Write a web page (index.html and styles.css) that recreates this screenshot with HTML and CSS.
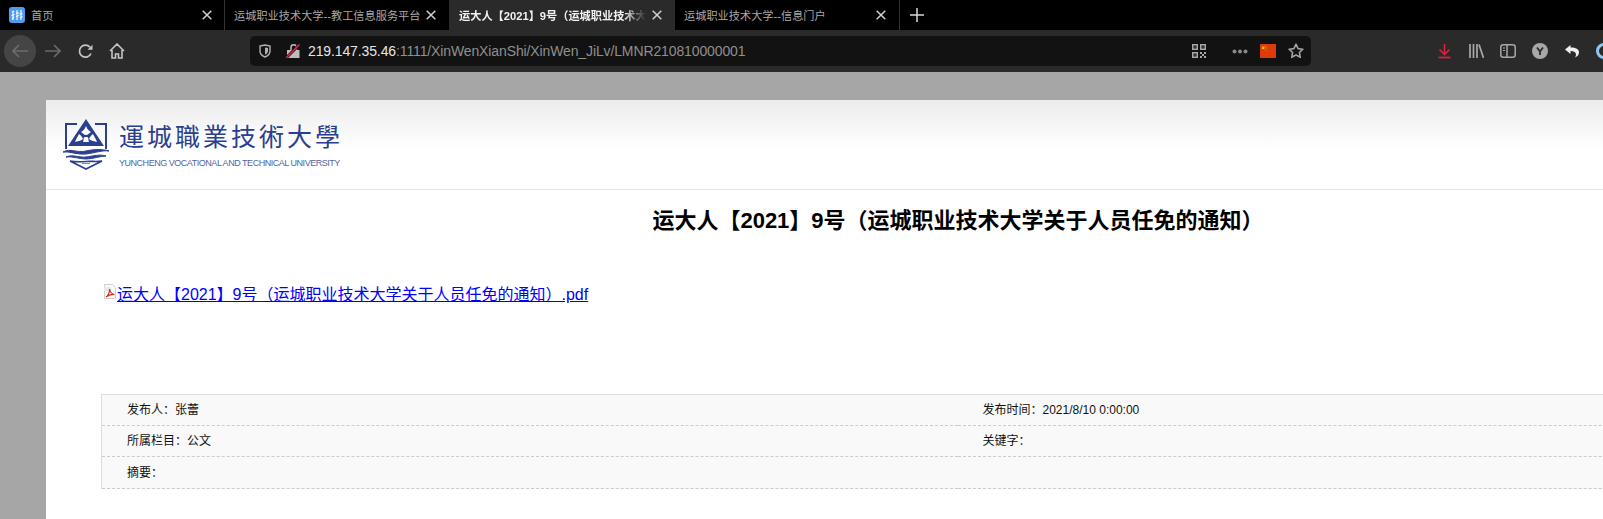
FILE: index.html
```html
<!DOCTYPE html>
<html lang="zh-CN">
<head>
    <meta charset="UTF-8">
    <title>运大人【2021】9号（运城职业技术大学关于人员任免的通知）</title>
    <link rel="stylesheet" href="styles.css">
</head>
<body>
    <!-- browser tabs -->
    <div class="tabs">
        <div class="tab tab-first">
            <svg class="favicon" width="16" height="16" viewBox="0 0 16 16">
                <rect width="16" height="16" rx="3" fill="#4f9df2"/>
                <path d="M3 5l2-1M4 4v9M2.500 8.500l3-1M3 12l2-2M8 3v10M7 6h3M7 9.500l3-1M12 3v10M10.500 7h3M11 11l2.500-1.500" stroke="#fff" stroke-width="1.100" fill="none"/>
            </svg>
            <span class="tab-title">首页</span>
            <svg class="close" width="10" height="10" viewBox="0 0 10 10"><path d="M.7.700l8.600 8.600M9.300.700L.7 9.300"/></svg>
        </div>
        <div class="tab tab-second">
            <span class="tab-title">运城职业技术大学--教工信息服务平台</span>
            <svg class="close" width="10" height="10" viewBox="0 0 10 10"><path d="M.7.700l8.600 8.600M9.300.700L.7 9.300"/></svg>
        </div>
        <div class="tab tab-active">
            <span class="tab-title">运大人【2021】9号（运城职业技术大</span>
            <svg class="close" width="10" height="10" viewBox="0 0 10 10"><path d="M.7.700l8.600 8.600M9.300.700L.7 9.300"/></svg>
        </div>
        <div class="tab tab-last">
            <span class="tab-title">运城职业技术大学--信息门户</span>
            <svg class="close" width="10" height="10" viewBox="0 0 10 10"><path d="M.7.700l8.600 8.600M9.300.700L.7 9.300"/></svg>
        </div>
        <div class="new-tab">
            <svg width="14" height="14" viewBox="0 0 14 14"><path d="M7 0v14M0 7h14" stroke="#d8d8d8" stroke-width="1.500"/></svg>
        </div>
    </div>

    <!-- toolbar -->
    <div class="toolbar">
        <div class="nav-btn nav-back">
            <svg width="16" height="14" viewBox="0 0 16 14"><path d="M7 1L1 7l6 6M1 7h15" stroke="#6c6c6c" stroke-width="1.700" fill="none"/></svg>
        </div>
        <div class="nav-btn">
            <svg width="16" height="14" viewBox="0 0 16 14"><path d="M9 1l6 6-6 6M15 7H0" stroke="#6a6a6a" stroke-width="1.700" fill="none"/></svg>
        </div>
        <div class="nav-btn">
            <svg width="15" height="15" viewBox="0 0 15 15"><path d="M13 9.500A6 6 0 1 1 12 3.200" stroke="#c4c4c4" stroke-width="1.700" fill="none"/><path d="M14.500.800v5h-5z" fill="#c4c4c4"/></svg>
        </div>
        <div class="nav-btn">
            <svg width="16" height="16" viewBox="0 0 16 16"><path d="M1 8l7-7 7 7M3 7v8h3.500v-4h3v4H13V7" stroke="#c4c4c4" stroke-width="1.600" fill="none"/></svg>
        </div>

        <div class="urlbar">
            <svg class="shield" width="12" height="14" viewBox="0 0 12 14"><path d="M1 2l5-1 5 1v5c0 3-2.500 5-5 6-2.500-1-5-3-5-6z" stroke="#b0b0b0" stroke-width="1.400" fill="none"/><path d="M6 3.500l3 .6v3c0 1.800-1.500 3-3 3.700z" fill="#b0b0b0"/></svg>
            <svg class="lock" width="14" height="14" viewBox="0 0 14 14"><path d="M1 6h12.500v8H1z" fill="#bdbdbd"/><path d="M5 6V3.500a2.700 2.700 0 0 1 5.400 0V6" stroke="#bdbdbd" stroke-width="1.500" fill="none"/><path d="M0 14L13.500 .5" stroke="#121212" stroke-width="3"/><path d="M0 14L13.500 .5" stroke="#e22850" stroke-width="1.500"/></svg>
            <span class="url"><span class="url-host">219.147.35.46</span>:1111/XinWenXianShi/XinWen_JiLv/LMNR210810000001</span>
            <div class="url-actions">
                <svg class="qr" width="14" height="14" viewBox="0 0 14 14"><path fill="#a8a8a8" d="M0 0h6v6H0zM1.500 1.500v3h3v-3zM8 0h6v6H8zM9.500 1.500v3h3v-3zM0 8h6v6H0zM1.500 9.500v3h3v-3zM8 8h2v2H8zM12 8h2v2h-2zM10 10h2v2h-2zM8 12h2v2H8zM12 12h2v2h-2zM2.500 2.500h1v1h-1zM10.500 2.500h1v1h-1zM2.500 10.500h1v1h-1z"/></svg>
                <svg class="dots" width="16" height="5" viewBox="0 0 16 5"><circle cx="2.500" cy="2.500" r="2"/><circle cx="8" cy="2.500" r="2"/><circle cx="13.500" cy="2.500" r="2"/></svg>
                <svg class="flag" width="16" height="14" viewBox="0 0 16 14"><rect width="16" height="14" fill="#de3a0c"/><path d="M2 2.500h2.500v2.500H2z" fill="#f0c020"/><path d="M5.500 1.500h.7v.7h-.7zM6.200 3h.7v.7h-.7zM6.200 4.600h.7v.7h-.7zM5.500 6h.7v.7h-.7z" fill="#f0c020"/></svg>
                <svg class="star" width="16" height="16" viewBox="0 0 16 16"><path d="M8 1.200l2.100 4.400 4.800.6-3.500 3.300.9 4.800L8 12l-4.300 2.300.9-4.800L1.100 6.200l4.800-.6z" stroke="#a0a0a0" stroke-width="1.600" stroke-linejoin="round" fill="none"/></svg>
            </div>
        </div>

        <div class="tools">
            <div class="tool-btn">
                <svg width="13" height="15" viewBox="0 0 13 15"><path d="M6.500 0v10M1.500 5.500l5 5 5-5" stroke="#e02038" stroke-width="1.600" fill="none"/><path d="M.5 13.500h12" stroke="#e02038" stroke-width="1.700"/></svg>
            </div>
            <div class="tool-btn">
                <svg width="15" height="14" viewBox="0 0 15 14"><path d="M1 0v14M4.500 0v14M8 0v14M10 .5l4.500 13.500" stroke="#a8a8a8" stroke-width="1.700" fill="none"/></svg>
            </div>
            <div class="tool-btn">
                <svg width="16" height="14" viewBox="0 0 16 14"><rect x=".8" y=".8" width="14.400" height="12.400" rx="2.500" stroke="#a8a8a8" stroke-width="1.500" fill="none"/><path d="M7 1v12" stroke="#a8a8a8" stroke-width="1.500"/><path d="M3 4h2M3 6.500h2" stroke="#a8a8a8"/></svg>
            </div>
            <div class="tool-btn">
                <svg width="16" height="16" viewBox="0 0 16 16"><circle cx="8" cy="8" r="8" fill="#a8a8a8"/><path d="M5 4.500l3 4 3-4M8 8.500V12" stroke="#2a2a2a" stroke-width="1.800" fill="none"/></svg>
            </div>
            <div class="tool-btn">
                <svg width="14" height="14" viewBox="0 0 14 14"><path d="M5.500 1L0 5.500 5.500 10V7c3.500 0 5.500 1.500 5.500 3.500 0 1-.3 2-1 3 2.500-1 4-3 4-5.300 0-3-3-4.700-8.500-4.700z" fill="#f0f0f0"/></svg>
            </div>
            <div class="tool-btn">
                <svg width="16" height="16" viewBox="0 0 16 16"><circle cx="8" cy="8" r="6.500" stroke="#8fc6f0" stroke-width="3" fill="none"/></svg>
            </div>
        </div>
    </div>

    <!-- page content -->
    <div class="viewport">
        <div class="page">
            <div class="head">
                <svg class="emblem" width="46" height="51" viewBox="0 0 46 51">
                    <path d="M14 5H3v25M32 5h11v25" stroke="#2b3f8f" stroke-width="2" fill="none"/>
                    <path d="M23 0L5 27h36z" fill="#2b3f8f"/>
                    <path d="M23 7c-1 3-3 5-5 6 2 1 3 3 5 3 2 0 3-2 5-3-2-1-4-3-5-6z" fill="#fff"/>
                    <path d="M16 15c2 1 3 3 4 5-2 2-6 2-8 3 1-3 3-6 4-8zM30 15c-2 1-3 3-4 5 2 2 6 2 8 3-1-3-3-6-4-8zM22 18c-2 0-1 3-2 5h6c-1-2 0-5-2-5z" fill="#fff"/>
                    <path d="M0 33c7-4 14 1 23-1s16-2 23 0c-7-1-14 2-23 3S6 32 0 33z" fill="#2b3f8f" stroke="#2b3f8f"/>
                    <path d="M3 38c7-3 13 1 20 0s14-3 20-1c-6 0-13 3-20 3S9 37 3 38z" fill="#2b3f8f" stroke="#2b3f8f"/>
                    <path d="M7 42l16 8 16-8c-5 1-10 0-16 .5-6 .5-11 .5-16-.5z" fill="#fff" stroke="#2b3f8f" stroke-width="1.600"/>
                    <path d="M19 44.500h8" stroke="#7a86b8"/>
                </svg>
                <div class="logo-text">
                    <div class="logo-cn">運城職業技術大學</div>
                    <div class="logo-en">YUNCHENG VOCATIONAL AND TECHNICAL UNIVERSITY</div>
                </div>
            </div>

            <h1 class="title">运大人【2021】9号（运城职业技术大学关于人员任免的通知）</h1>

            <p class="attachment">
                <svg class="pdf-icon" width="14" height="15" viewBox="0 0 14 15">
                    <path d="M1.500.500h8l3 3v11h-11z" fill="#fafafa" stroke="#d0d0d0"/>
                    <path d="M1 3h7v4H1z" fill="#e8e8e8"/>
                    <path d="M3 13c2-1 4-5 3.500-8 .5 3 2 5 5 5.500-3-.5-6 .5-8.500 2.500z" stroke="#d42a20" stroke-width="1.200" fill="none"/>
                </svg><a href="#">运大人【2021】9号（运城职业技术大学关于人员任免的通知）.pdf</a>
            </p>

            <table class="info">
                <tr>
                    <td>发布人：张蕾</td>
                    <td>发布时间：2021/8/10 0:00:00</td>
                </tr>
                <tr>
                    <td>所属栏目：公文</td>
                    <td>关键字：</td>
                </tr>
                <tr class="info-last">
                    <td>摘要：</td>
                    <td></td>
                </tr>
            </table>
        </div>
    </div>
</body>
</html>
```

FILE: styles.css
```css
* {
    box-sizing: border-box;
}
html, body {
    margin: 0;
    height: 519px;
    overflow: hidden;
}
body {
    width: 1603px;
    font-family: "Liberation Sans", "Noto Sans CJK SC", sans-serif;
    background: #a6a6a6;
}

/* tabs */
.tabs {
    display: flex;
    height: 30px;
    background: #000;
    color: #a8a8a8;
    font-size: 11.200px;
}
.tab {
    display: flex;
    align-items: center;
    flex: none;
    width: 225px;
    padding: 0 10px;
    border-right: 1px solid #333;
}
.tab-first {
    padding-left: 9px;
    padding-right: 12px;
}
.tab-second {
    padding-left: 9px;
    padding-right: 13px;
    border-right: 0;
    width: 224px;
}
.tab-active {
    width: 226px;
    padding-right: 13px;
    background: #2a2a2a;
    color: #f2f2f2;
    font-weight: bold;
    border-right: 0;
}
.tab-last {
    padding-left: 9px;
    padding-right: 13px;
}
.favicon {
    flex: none;
    margin-right: 6px;
}
.tab-title {
    flex: 1;
    min-width: 0;
    overflow: hidden;
    white-space: nowrap;
}
.tab-active .tab-title {
    -webkit-mask-image: linear-gradient(to right, #000 88%, transparent 100%);
    mask-image: linear-gradient(to right, #000 88%, transparent 100%);
}
.close {
    flex: none;
    margin-left: 6px;
    stroke: #d0d0d0;
    stroke-width: 1.500;
    fill: none;
}
.new-tab {
    display: flex;
    align-items: center;
    padding-left: 10px;
}

/* toolbar */
.toolbar {
    display: flex;
    align-items: center;
    height: 42px;
    padding-left: 4px;
    background: #2a2a2a;
}
.nav-btn {
    display: flex;
    align-items: center;
    justify-content: center;
    flex: none;
    width: 32px;
    height: 32px;
}
.nav-back {
    margin-right: 1px;
    border-radius: 50%;
    background: #454545;
}
.urlbar {
    display: flex;
    align-items: center;
    flex: none;
    width: 1061px;
    height: 30px;
    margin-left: 117px;
    padding: 0 7px 0 9px;
    border-radius: 5px;
    background: #121212;
}
.lock {
    margin-left: 15px;
}
.url {
    margin-left: 8px;
    font-size: 14px;
    letter-spacing: -.12px;
    color: #8f8f8f;
    white-space: nowrap;
}
.url-host {
    color: #e6e6e6;
}
.url-actions {
    display: flex;
    align-items: center;
    margin-left: auto;
}
.qr {
    margin-right: 26px;
}
.dots {
    margin-right: 12px;
    fill: #8a8a8a;
}
.star {
    margin-left: 12px;
}
.tools {
    display: flex;
    flex: none;
    margin-left: 117px;
}
.tool-btn {
    display: flex;
    align-items: center;
    justify-content: center;
    flex: none;
    width: 32px;
    height: 32px;
}

/* page */
.viewport {
    height: 447px;
    padding: 28px 0 0 46px;
    overflow: hidden;
}
.page {
    width: 1824px;
    height: 500px;
    background: #fff;
}
.head {
    display: flex;
    height: 90px;
    padding: 19px 0 0 17px;
    border-bottom: 1px solid #e5e5e5;
    background: linear-gradient(#ececec, #fff 55%);
}
.emblem {
    flex: none;
}
.logo-text {
    margin-left: 10px;
    color: #2b3f8f;
}
.logo-cn {
    height: 38px;
    font-size: 25px;
    line-height: 36px;
    letter-spacing: 3px;
    white-space: nowrap;
}
.logo-en {
    font-size: 9px;
    line-height: 12px;
    color: #56649f;
    letter-spacing: -.47px;
    white-space: nowrap;
}
.title {
    margin: 16px 0 0;
    font-size: 22px;
    line-height: 30px;
    text-align: center;
    color: #000;
}
.attachment {
    display: flex;
    align-items: center;
    margin: 45px 0 0 57px;
    height: 24px;
    font-size: 16px;
}
.pdf-icon {
    flex: none;
    margin: -4px 0 0 0;
}
.attachment a {
    color: #00f;
}
.info {
    width: 1716px;
    margin: 89px 0 0 55px;
    border-collapse: collapse;
    table-layout: fixed;
    border-top: 1px solid #ddd;
    border-left: 1px solid #ddd;
    background: #f9f9f9;
    font-size: 12px;
    color: #111;
}
.info td {
    height: 31px;
    padding: 0 0 3px 25px;
    border-bottom: 1px dashed #ccc;
}
.info td:first-child {
    width: 856px;
}
.info-last td {
    height: 32px;
}
```
